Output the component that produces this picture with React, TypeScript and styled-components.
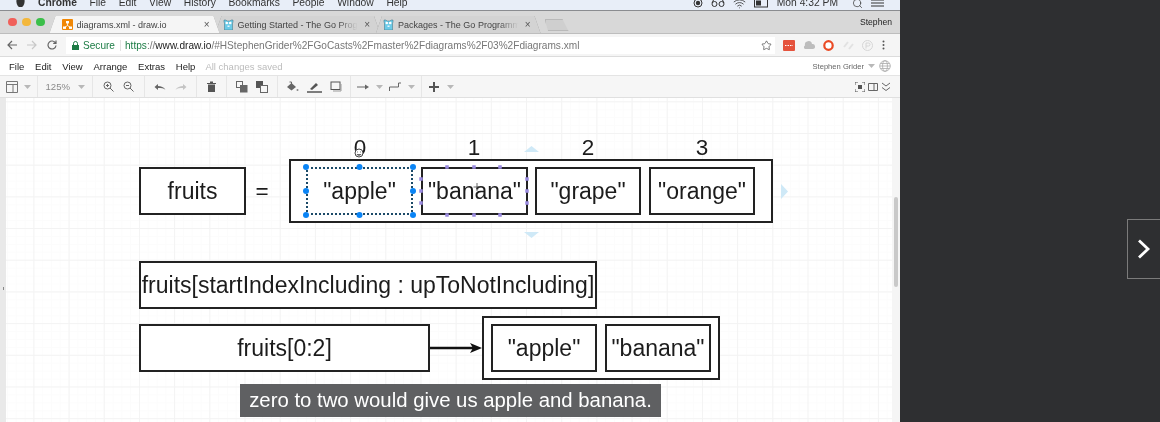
import React from 'react';
import styled, {createGlobalStyle} from 'styled-components';
import {Search, Star, Wifi} from 'lucide-react';

const GlobalStyle = createGlobalStyle`
  html, body {
    margin: 0;
    padding: 0;
    background: #2e2f31;
    font-family: "Liberation Sans", Arial, sans-serif;
  }
`;

const Page = styled.div`
  display: flex;
  width: 1160px;
  height: 422px;
  overflow: hidden;
`;

const Screen = styled.div`
  position: relative;
  display: flex;
  flex-direction: column;
  width: 900px;
  height: 422px;
  overflow: hidden;
  background: #fff;
  filter: blur(0.4px);
`;

const MacBar = styled.div`
  display: flex;
  align-items: flex-start;
  flex: none;
  height: 10px;
  padding-left: 15px;
  background: #e8eef8;
  border-bottom: 1px solid #8a8c90;
  overflow: hidden;
  font-size: 10.3px;
  line-height: 12px;
  color: #333;
`;

const MacItems = styled.div`
  display: flex;
  gap: 12.6px;
  margin-top: -3.5px;
  margin-left: 12px;
`;

const MacItem = styled.span<{$bold?: boolean}>`
  font-weight: ${p => (p.$bold ? 700 : 400)};
`;

const MacStatus = styled.div`
  display: flex;
  align-items: center;
  gap: 8px;
  margin-left: auto;
  margin-right: 16px;
  margin-top: -3.5px;
  color: #333;
`;

const MacClock = styled.span`
  margin: 0 6px 0 -1px;
`;

const TabStrip = styled.div`
  display: flex;
  align-items: flex-end;
  flex: none;
  height: 22px;
  padding-left: 8px;
  background: #d8d8d8;
`;

const Lights = styled.div`
  display: flex;
  gap: 5.5px;
  align-self: center;
  margin-right: 5px;
`;

const Light = styled.span<{$color: string}>`
  width: 8.5px;
  height: 8.5px;
  border-radius: 50%;
  background: ${p => p.$color};
`;

const TabFrame = styled.div<{$active?: boolean}>`
  position: relative;
  z-index: ${p => (p.$active ? 2 : 1)};
  flex: none;
  margin-right: -4px;
  filter: drop-shadow(0 0 0.6px #8f8f8f);
`;

const Tab = styled.div<{$active?: boolean; $width: number}>`
  display: flex;
  align-items: center;
  gap: 4px;
  width: ${p => p.$width}px;
  height: 17px;
  padding: 0 10px 0 ${p => (p.$active ? 12 : 7)}px;
  box-sizing: border-box;
  background: ${p => (p.$active ? '#f5f5f5' : '#d3d3d3')};
  clip-path: polygon(0 100%, 6px 0, calc(100% - 6px) 0, 100% 100%);
  font-size: 9px;
  color: #444;
  white-space: nowrap;
  overflow: hidden;
`;

const TabTitle = styled.span<{$fade?: boolean}>`
  flex: 1;
  overflow: hidden;
  ${p => (p.$fade ? 'mask-image: linear-gradient(to right, #000 82%, transparent 98%);' : '')}
`;

const TabClose = styled.span`
  color: #555;
  font-size: 10px;
`;

const NewTab = styled.div`
  width: 22px;
  height: 10px;
  margin-left: 8px;
  margin-bottom: 2px;
  background: #cfcfcf;
  border: 1px solid #b9b9b9;
  clip-path: polygon(0 0, 75% 0, 100% 100%, 15% 100%);
`;

const Profile = styled.div`
  margin-left: auto;
  margin-right: 8px;
  align-self: center;
  font-size: 8.6px;
  color: #222;
`;

const AddressRow = styled.div`
  display: flex;
  align-items: center;
  flex: none;
  height: 24px;
  padding-left: 7px;
  background: #f5f5f5;
  border-top: 1px solid #bdbdbd;
  border-bottom: 1px solid #dcdcdc;
  box-sizing: border-box;
`;

const NavButtons = styled.div`
  display: flex;
  align-items: center;
  gap: 10px;
  width: 59px;
`;

const Omnibox = styled.div`
  display: flex;
  align-items: center;
  width: 709px;
  height: 17px;
  box-sizing: border-box;
  padding: 0 3px 0 6px;
  background: #fff;
  font-size: 10.1px;
  white-space: nowrap;
`;

const SecureLabel = styled.span`
  color: #1c7c45;
  margin-left: 4px;
  padding-right: 5px;
  margin-right: 4px;
  border-right: 1px solid #e2e2e2;
`;

const UrlScheme = styled.span`
  color: #1c7c45;
`;

const UrlHost = styled.span`
  color: #222;
`;

const UrlPath = styled.span`
  color: #777;
  flex: 1;
`;

const Extensions = styled.div`
  display: flex;
  align-items: center;
  gap: 8.5px;
  margin-left: 8px;
`;

const MenuRow = styled.div`
  display: flex;
  align-items: center;
  flex: none;
  height: 19px;
  padding: 0 9px;
  background: #fff;
  border-bottom: 1px solid #e4e4e4;
  box-sizing: border-box;
  font-size: 9.5px;
  color: #222;
`;

const MenuItems = styled.div`
  display: flex;
  gap: 10.8px;
`;

const SavedNote = styled.span`
  margin-left: 10px;
  color: #bcbcbc;
`;

const Account = styled.div`
  display: flex;
  align-items: center;
  gap: 4px;
  margin-left: auto;
  font-size: 7.6px;
  color: #666;
`;

const Toolbar = styled.div`
  display: flex;
  align-items: center;
  flex: none;
  height: 22px;
  background: #f6f6f6;
  border-bottom: 1px solid #e0e0e0;
  box-sizing: border-box;
`;

const ToolGroup = styled.div<{$width: number; $last?: boolean}>`
  display: flex;
  align-items: center;
  justify-content: space-evenly;
  width: ${p => p.$width}px;
  height: 100%;
  box-sizing: border-box;
  border-right: ${p => (p.$last ? 'none' : '1px solid #e6e6e6')};
  font-size: 9.6px;
  color: #8a8a8a;
`;

const ToolRight = styled.div`
  display: flex;
  align-items: center;
  gap: 3px;
  margin-left: auto;
  margin-right: 9px;
`;

const Workspace = styled.div`
  display: flex;
  flex: 1;
  min-height: 0;
`;

const LeftStrip = styled.div`
  width: 6px;
  padding: 189px 0 0 2.5px;
  box-sizing: border-box;
  background: #e9e9e9;
`;

const StripMark = styled.div`
  width: 1px;
  height: 3px;
  background: #888;
`;

const Canvas = styled.div`
  position: relative;
  flex: 1;
  overflow: hidden;
  background-color: #fff;
  background-image:
    linear-gradient(to right, #f3f3f3 1px, transparent 1px),
    linear-gradient(to bottom, #f3f3f3 1px, transparent 1px),
    linear-gradient(to right, #fcfcfc 1px, transparent 1px),
    linear-gradient(to bottom, #fcfcfc 1px, transparent 1px);
  background-size: 35.2px 31.7px, 35.2px 31.7px, 8.8px 7.93px, 8.8px 7.93px;
  background-position: 27.4px 3.3px, 27.4px 3.3px, 1px 3.3px, 1px 3.3px;
`;

const ScrollTrack = styled.div`
  display: flex;
  justify-content: center;
  width: 8px;
  padding-top: 99px;
  box-sizing: border-box;
  background: #f5f5f5;
`;

const ScrollThumb = styled.div`
  width: 4px;
  height: 90px;
  border-radius: 2px;
  background: #c9c9c9;
`;

const Node = styled.div<{$x: number; $y: number; $w: number; $h: number; $selected?: boolean}>`
  position: absolute;
  left: ${p => p.$x - 6}px;
  top: ${p => p.$y - 98}px;
  width: ${p => p.$w}px;
  height: ${p => p.$h}px;
  box-sizing: border-box;
  display: flex;
  align-items: center;
  justify-content: center;
  background: #fff;
  border: 2px ${p => (p.$selected ? 'dotted #1b4a68' : 'solid #222')};
  font-size: 23px;
  color: #1c1c1c;
  white-space: nowrap;
`;

const Label = styled.div<{$x: number; $y: number}>`
  position: absolute;
  left: ${p => p.$x - 6}px;
  top: ${p => p.$y - 98}px;
  transform: translate(-50%, -50%);
  font-size: 22.5px;
  line-height: 26px;
  color: #1c1c1c;
`;

const Overlay = styled.svg`
  position: absolute;
  left: 0;
  top: 0;
  width: 886px;
  height: 324px;
  pointer-events: none;
`;

const Caption = styled.div`
  position: absolute;
  left: 240px;
  top: 384px;
  width: 421px;
  height: 33px;
  display: flex;
  align-items: center;
  justify-content: center;
  background: #5f6062;
  color: #fff;
  font-size: 20.35px;
  white-space: nowrap;
`;

const SidePanel = styled.div`
  display: flex;
  justify-content: flex-end;
  align-items: flex-start;
  flex: 1;
  padding-top: 219px;
  background: #2e2f31;
`;

const NextButton = styled.div`
  display: flex;
  align-items: center;
  justify-content: center;
  width: 33px;
  height: 60px;
  box-sizing: border-box;
  border: 1px solid #7b7b7b;
  border-right: none;
`;

const Caret = () => (
  <svg width="7" height="4" viewBox="0 0 7 4"><path d="M0 0h7L3.5 4z" fill="#b8b8b8"/></svg>
);

const Icon = ({w = 14, h = 14, children}: {w?: number; h?: number; children: React.ReactNode}) => (
  <svg width={w} height={h} viewBox={`0 0 ${w} ${h}`} fill="none">{children}</svg>
);

const Gopher = () => (
  <Icon w={11} h={11}>
    <path d="M1 3V1h2l1 1h3l1-1h2v2l-.500 1v7h-8V4z" fill="#6ccbe8" stroke="#3b6f80" strokeWidth="0.500"/>
    <circle cx="3.800" cy="4" r="1.300" fill="#fff"/>
    <circle cx="7.200" cy="4" r="1.300" fill="#fff"/>
    <path d="M4.500 6.500h2V8h-2z" fill="#e8f6fb"/>
  </Icon>
);

const DrawioIcon = () => (
  <Icon w={11} h={11}>
    <rect width="11" height="11" rx="1" fill="#f08705"/>
    <path d="M5.500 4v2.500M5.500 6.500L2.500 8.500M5.500 6.500l3 2" stroke="#fff" strokeWidth="0.800"/>
    <rect x="4" y="2" width="3" height="2.400" fill="#fff"/>
    <rect x="1" y="7.500" width="3" height="2.400" fill="#fff"/>
    <rect x="7" y="7.500" width="3" height="2.400" fill="#fff"/>
  </Icon>
);

const menuItems = ['File', 'Edit', 'View', 'Arrange', 'Extras', 'Help'];
const macItems = ['File', 'Edit', 'View', 'History', 'Bookmarks', 'People', 'Window', 'Help'];

const handles = [
  [306, 167], [359.5, 167], [413, 167],
  [306, 191], [413, 191],
  [306, 215], [359.5, 215], [413, 215],
];

const bananaHandles = [
  [447, 167], [474, 167], [500, 167],
  [421, 179], [421, 191], [421, 203],
  [527, 179], [527, 191], [527, 203],
  [447, 215], [474, 215], [500, 215],
];

function Diagram() {
  return (
    <Canvas>
      <Label $x={360} $y={148}>0</Label>
      <Label $x={474} $y={148}>1</Label>
      <Label $x={588} $y={148}>2</Label>
      <Label $x={702} $y={148}>3</Label>

      <Node $x={139} $y={167} $w={107} $h={48}>fruits</Node>
      <Label $x={262} $y={192}>=</Label>
      <Node $x={289} $y={159} $w={484} $h={64}/>
      <Node $x={306} $y={167} $w={107} $h={48} $selected>"apple"</Node>
      <Node $x={421} $y={167} $w={107} $h={48}>"banana"</Node>
      <Node $x={535} $y={167} $w={106} $h={48}>"grape"</Node>
      <Node $x={649} $y={167} $w={106} $h={48}>"orange"</Node>

      <Node $x={139} $y={261} $w={458} $h={48}>fruits[startIndexIncluding : upToNotIncluding]</Node>
      <Node $x={139} $y={324} $w={291} $h={48}>fruits[0:2]</Node>
      <Node $x={482} $y={316} $w={238} $h={64}/>
      <Node $x={491} $y={324} $w={106} $h={48}>"apple"</Node>
      <Node $x={605} $y={324} $w={106} $h={48}>"banana"</Node>

      <Overlay viewBox="6 98 886 324">
        <path d="M430 348H474" stroke="#111" strokeWidth="2.500"/>
        <path d="M482 348l-12-5 3 5-3 5z" fill="#111"/>
        <path d="M524 152h15l-7.500-6z" fill="#cfe9f7"/>
        <path d="M524 232h15l-7.500 6z" fill="#cfe9f7"/>
        <path d="M781 184v15l7-7.500z" fill="#cfe9f7"/>
        {handles.map(([x, y]) => (
          <circle key={`h_${x}_${y}`} cx={x} cy={y} r="3" fill="#0a84f5"/>
        ))}
        {bananaHandles.map(([x, y]) => (
          <rect key={`b_${x}_${y}`} x={x - 1.750} y={y - 1.750} width="3.500" height="3.500" fill="#9a8be0"/>
        ))}
        <circle cx="359" cy="153" r="4" fill="#fff" stroke="#444"/>
        <path d="M357 152h.8M360 152h.8M356.800 154.500q2.200 1.500 4.400 0" stroke="#333" strokeWidth="0.800"/>
        <path d="M477 183v8M473.500 187h7" stroke="#444" strokeWidth="0.800"/>
      </Overlay>
    </Canvas>
  );
}

function App() {
  return (
    <Page>
      <GlobalStyle/>
      <Screen>
        <MacBar>
          <svg width="11" height="9" viewBox="0 0 11 9"><path d="M1.500 0h8c.5 2-.5 6-2.500 7H4C2 6 1 2 1.500 0z" fill="#333"/></svg>
          <MacItems>
            <MacItem $bold>Chrome</MacItem>
            {macItems.map(m => <MacItem key={m}>{m}</MacItem>)}
          </MacItems>
          <MacStatus>
            <svg width="10" height="10" viewBox="0 0 10 10"><circle cx="5" cy="5" r="4" stroke="#333" fill="none"/><circle cx="5" cy="5" r="2.200" fill="#333"/></svg>
            <svg width="14" height="10" viewBox="0 0 14 10" fill="none" stroke="#333"><circle cx="3.500" cy="6" r="2.500"/><circle cx="10.500" cy="6" r="2.500"/><path d="M1 5l2-4h8l2 4"/></svg>
            <Wifi size={13} strokeWidth={1.500}/>
            <svg width="16" height="10" viewBox="0 0 16 10"><rect x="0.500" y="1" width="13" height="8" fill="none" stroke="#333"/><rect x="2" y="2.500" width="5" height="5" fill="#333"/></svg>
            <MacClock>Mon 4:32 PM</MacClock>
            <Search size={11} strokeWidth={1.500}/>
            <svg width="13" height="10" viewBox="0 0 13 10" stroke="#333"><path d="M0 2h13M0 5h13M0 8h13"/></svg>
          </MacStatus>
        </MacBar>

        <TabStrip>
          <Lights>
            <Light $color="#f0605a"/>
            <Light $color="#f3b73b"/>
            <Light $color="#3bbf4a"/>
          </Lights>
          <TabFrame $active>
            <Tab $active $width={170}>
              <DrawioIcon/>
              <TabTitle>diagrams.xml - draw.io</TabTitle>
              <TabClose>×</TabClose>
            </Tab>
          </TabFrame>
          <TabFrame>
            <Tab $width={164.5}>
              <Gopher/>
              <TabTitle $fade>Getting Started - The Go Programming</TabTitle>
              <TabClose>×</TabClose>
            </Tab>
          </TabFrame>
          <TabFrame>
            <Tab $width={164.5}>
              <Gopher/>
              <TabTitle $fade>Packages - The Go Programming</TabTitle>
              <TabClose>×</TabClose>
            </Tab>
          </TabFrame>
          <NewTab/>
          <Profile>Stephen</Profile>
        </TabStrip>

        <AddressRow>
          <NavButtons>
            <Icon w={10} h={10}><path d="M10 5H1M5 1L1 5l4 4" stroke="#666" strokeWidth="1.200"/></Icon>
            <Icon w={10} h={10}><path d="M0 5h9M5 1l4 4-4 4" stroke="#c8c8c8" strokeWidth="1.200"/></Icon>
            <Icon w={10} h={10}><path d="M8.500 3A4 4 0 1 0 9 5.500M9 .5V3.300H6.200" stroke="#666" strokeWidth="1.200"/></Icon>
          </NavButtons>
          <Omnibox>
            <svg width="7" height="9" viewBox="0 0 7 9"><path d="M0 4h7v5H0z" fill="#1c7c45"/><path d="M1.500 4V2.500a2 2 0 0 1 4 0V4" stroke="#1c7c45" fill="none"/></svg>
            <SecureLabel>Secure</SecureLabel>
            <UrlScheme>https</UrlScheme>
            <UrlPath>
              ://<UrlHost>www.draw.io</UrlHost>/#HStephenGrider%2FGoCasts%2Fmaster%2Fdiagrams%2F03%2Fdiagrams.xml
            </UrlPath>
            <Star size={11} color="#444" strokeWidth={1.500}/>
          </Omnibox>
          <Extensions>
            <svg width="12" height="11" viewBox="0 0 12 11"><rect width="12" height="11" rx="1" fill="#e5533d"/><path d="M2 5.500h8" stroke="#fff" strokeDasharray="1.500 1"/></svg>
            <svg width="11" height="9" viewBox="0 0 11 9"><path d="M1 8a2 2 0 0 1 0-3.500A3.500 3.500 0 0 1 8 3a2.500 2.500 0 0 1 1 5z" fill="#bdbdbd"/></svg>
            <svg width="11" height="11" viewBox="0 0 11 11"><ellipse cx="5.500" cy="5.500" rx="4.200" ry="4.400" stroke="#ea4a24" strokeWidth="2.200" fill="#fff"/></svg>
            <svg width="11" height="9" viewBox="0 0 11 9"><path d="M1 6l4-5M6 8l4-5" stroke="#e2e2e2" strokeWidth="2"/></svg>
            <svg width="11" height="11" viewBox="0 0 11 11"><circle cx="5.500" cy="5.500" r="5" stroke="#d6d6d6" fill="none"/><path d="M4 8.500V3h2.500a1.500 1.500 0 0 1 0 3H4" stroke="#d6d6d6" fill="none"/></svg>
            <svg width="3" height="10" viewBox="0 0 3 10" fill="#555"><circle cx="1.500" cy="1.500" r="1"/><circle cx="1.500" cy="5" r="1"/><circle cx="1.500" cy="8.500" r="1"/></svg>
          </Extensions>
        </AddressRow>

        <MenuRow>
          <MenuItems>
            {menuItems.map(m => <span key={m}>{m}</span>)}
          </MenuItems>
          <SavedNote>All changes saved</SavedNote>
          <Account>
            Stephen Grider <Caret/>
            <svg width="12" height="12" viewBox="0 0 12 12" fill="none" stroke="#aaa" strokeWidth="0.800"><circle cx="6" cy="6" r="5.300"/><ellipse cx="6" cy="6" rx="2.400" ry="5.300"/><path d="M.7 6h10.600M1.500 3.500h9M1.500 8.500h9"/></svg>
          </Account>
        </MenuRow>

        <Toolbar>
          <ToolGroup $width={38}>
            <Icon w={12} h={12}><path d="M.5.500h11v11H.5zM.5 3.500h11M7 3.500v8" stroke="#777"/></Icon>
            <Caret/>
          </ToolGroup>
          <ToolGroup $width={55}>
            <span>125%</span>
            <Caret/>
          </ToolGroup>
          <ToolGroup $width={52}>
            <Icon w={11} h={11}><circle cx="4.500" cy="4.500" r="3.500" stroke="#666"/><path d="M7 7l3.500 3.500M3 4.500h3M4.500 3v3" stroke="#666"/></Icon>
            <Icon w={11} h={11}><circle cx="4.500" cy="4.500" r="3.500" stroke="#666"/><path d="M7 7l3.500 3.500M3 4.500h3" stroke="#666"/></Icon>
          </ToolGroup>
          <ToolGroup $width={52}>
            <Icon w={12} h={8}><path d="M.5 4L4 1v2c3 0 6 1 7.500 4-2-2-4-2-7.500-2v2z" fill="#666"/></Icon>
            <Icon w={12} h={8}><path d="M11.500 4L8 1v2C5 3 2 4 .5 7c2-2 4-2 7.500-2v2z" fill="#c4c4c4"/></Icon>
          </ToolGroup>
          <ToolGroup $width={30}>
            <Icon w={11} h={11}><path d="M1 2h9v1H1zM2 3.500h7V11H2zM4 .5h3V2H4z" fill="#555"/></Icon>
          </ToolGroup>
          <ToolGroup $width={51}>
            <Icon w={12} h={12}><rect x="0.500" y="0.500" width="6" height="6" stroke="#666"/><rect x="4" y="4" width="7.500" height="7.500" fill="#666"/></Icon>
            <Icon w={12} h={12}><rect x="0" y="0" width="7" height="7" fill="#555"/><rect x="4.500" y="4.500" width="7" height="7" fill="#f6f6f6" stroke="#666"/></Icon>
          </ToolGroup>
          <ToolGroup $width={73}>
            <Icon w={13} h={12}><path d="M1 6l4.500-4 4.500 4-4.500 3.500z" fill="#666"/><path d="M3.500 1h2v2" stroke="#666"/><circle cx="11.500" cy="9" r="1" fill="#888"/></Icon>
            <Icon w={15} h={12}><path d="M0 11h15" stroke="#555" strokeWidth="1.500"/><path d="M3 8l6-6 2 2-6 5z" fill="#555"/></Icon>
            <Icon w={12} h={11}><rect x="1" y="1" width="9" height="7.500" stroke="#555"/><path d="M3 10h8V3" stroke="#999"/></Icon>
          </ToolGroup>
          <ToolGroup $width={71}>
            <Icon w={12} h={6}><path d="M0 3h9" stroke="#666"/><path d="M12 3L8 .5v5z" fill="#666"/></Icon>
            <Caret/>
            <Icon w={12} h={10}><path d="M.5 9V5h9V1H12M.5 9" stroke="#666"/></Icon>
            <Caret/>
          </ToolGroup>
          <ToolGroup $width={39} $last>
            <Icon w={10} h={10}><path d="M4 0h2v4h4v2H6v4H4V6H0V4h4z" fill="#555"/></Icon>
            <Caret/>
          </ToolGroup>
          <ToolRight>
            <Icon w={10} h={10}><path d="M0 3V0h3M7 0h3v3M10 7v3H7M3 10H0V7" stroke="#555"/><rect x="3" y="3" width="4" height="4" fill="#555"/></Icon>
            <Icon w={10} h={10}><path d="M.5 1.500h9v7h-9zM6 1.500v7" stroke="#666"/></Icon>
            <Icon w={10} h={10}><path d="M1 1l4 3 4-3M1 5.500l4 3 4-3" stroke="#666"/></Icon>
          </ToolRight>
        </Toolbar>

        <Workspace>
          <LeftStrip><StripMark/></LeftStrip>
          <Diagram/>
          <ScrollTrack>
            <ScrollThumb/>
          </ScrollTrack>
        </Workspace>

        <Caption>zero to two would give us apple and banana.</Caption>
      </Screen>

      <SidePanel>
        <NextButton>
          <svg width="14" height="20" viewBox="0 0 14 20"><path d="M2 1.500L11 10 2 18.500" stroke="#fff" strokeWidth="2.800" fill="none"/></svg>
        </NextButton>
      </SidePanel>
    </Page>
  );
}

export default App;
